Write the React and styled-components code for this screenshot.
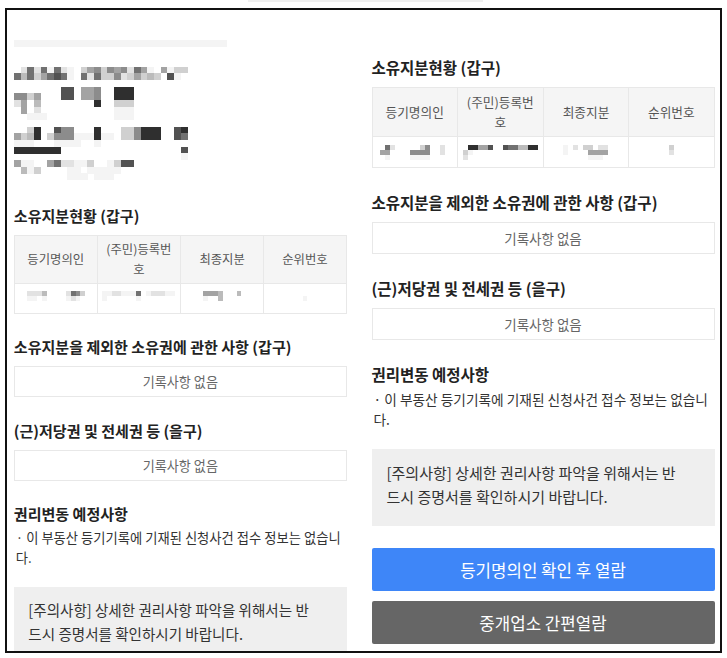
import React from "react";
import styled, { createGlobalStyle } from "styled-components";

const GlobalStyle = createGlobalStyle`
  html, body {
    margin: 0;
    padding: 0;
    background: #fff;
  }
  body {
    font-family: "Noto Sans CJK KR", "Noto Sans", sans-serif;
    color: #222;
  }
  * {
    box-sizing: border-box;
  }
`;

const SHADES = {
  1: "#f4f4f4",
  2: "#e2e2e2",
  3: "#d0d0d0",
  4: "#bbbbbb",
  5: "#a3a3a3",
  6: "#8c8c8c",
  7: "#717171",
  8: "#525252",
  9: "#2f2f2f",
};

const Page = styled.div`
  width: 727px;
  height: 658px;
  overflow: hidden;
  padding-left: 5px;
`;

const TopEdge = styled.div`
  width: 235px;
  height: 2px;
  margin: 0 0 6px 243px;
  background: #f0f0f0;
`;

const Frame = styled.div`
  display: flex;
  width: 717px;
  height: 645px;
  border: 2px solid #111;
  overflow: hidden;
`;

const Screen = styled.div`
  flex: none;
  width: ${(p) => p.$width}px;
  padding: ${(p) => p.$pad};
  zoom: ${(p) => p.$zoom || 1};
`;

const Intro = styled.div`
  height: 202px;
  padding-top: 31px;
`;

const MosaicSvg = styled.svg`
  display: block;
  filter: blur(0.3px);
`;

const Section = styled.section`
  margin-top: 24px;
  &:first-of-type {
    margin-top: 0;
  }
`;

const Title = styled.h3`
  margin: 0 0 10px;
  font-size: 15.5px;
  line-height: 20px;
  font-weight: 700;
  color: #222;
`;

const Table = styled.div`
  display: grid;
  grid-template-columns: repeat(4, 1fr);
  border-top: 1px solid #e8e8e8;
  border-left: 1px solid #e8e8e8;
`;

const HeadCell = styled.div`
  height: 49px;
  padding: 0 5px;
  display: flex;
  align-items: center;
  justify-content: center;
  text-align: center;
  background: #f5f5f5;
  border-right: 1px solid #e8e8e8;
  border-bottom: 1px solid #e8e8e8;
  font-size: 12.7px;
  line-height: 20px;
  color: #555;
`;

const DataCell = styled(HeadCell)`
  height: 31px;
  background: #fff;
`;

const EmptyBox = styled.div`
  height: 32px;
  display: flex;
  align-items: center;
  justify-content: center;
  border: 1px solid #e8e8e8;
  font-size: 13.5px;
  color: #666;
`;

const Bullet = styled.p`
  margin: -5px 0 0;
  padding-left: 2px;
  font-size: 13.7px;
  line-height: 20px;
  color: #333;
`;

const Notice = styled.div`
  margin-top: 20px;
  padding: 12px 28px 17px 15px;
  background: #efefef;
  font-size: 15px;
  line-height: 24px;
  color: #333;
`;

const ActionButton = styled.button`
  display: block;
  width: 100%;
  height: 43px;
  margin-top: ${(p) => p.$gap}px;
  border: 0;
  border-radius: 2px;
  background: ${(p) => p.$bg};
  color: #fff;
  font-family: "Noto Sans CJK KR", "Noto Sans", sans-serif;
  font-size: 16.8px;
  line-height: 43px;
`;

const Mosaic = ({ rows, cell }) => {
  const cols = Math.max(...rows.map((r) => r.length));
  return (
    <MosaicSvg
      width={cols * cell}
      height={rows.length * cell}
      viewBox={`0 0 ${cols} ${rows.length}`}
      shapeRendering="crispEdges"
    >
      {rows.flatMap((row, y) =>
        [...row].map((c, x) =>
          c === "0" ? null : (
            <rect key={`${x}-${y}`} x={x} y={y} width={1.02} height={1.02} fill={SHADES[c]} />
          )
        )
      )}
    </MosaicSvg>
  );
};

const introRows = [
  "11111111111111111111111111111111",
  "0",
  "0",
  "0",
  "02727172103563656275105133",
  "7473578710727336235343081",
  "0",
  "000000088055600999",
  "663500088055600999",
  "250400000000900333",
  "050200000000000111",
  "001110000000000111",
  "0",
  "00390086600090003369990089",
  "53490366611191103369990087",
  "11100011110010000000000000",
  "99999990000000000000000008",
  "00000000000000000000000001",
  "511005722113001388",
  "041300001101111100",
  "000000001110111000",
];

const rightCells = [
  ["07200000360020", "55000066660020", "01000011110000"],
  ["099558008774499", "310000000000000", "200000000000000"],
  ["102033022", "100005555", "000001110"],
  ["3", "2", "0"],
];

const leftCells = [
  ["222400002763", "110100001210", "000000000000"],
  ["112211170122211", "100000010000000", "000000000000000"],
  ["55540004", "10040000", "00000000"],
  ["1"],
];

const RegistryContent = ({ cells }) => (
  <>
    <Section>
      <Title>소유지분현황 (갑구)</Title>
      <Table>
        <HeadCell>등기명의인</HeadCell>
        <HeadCell>(주민)등록번호</HeadCell>
        <HeadCell>최종지분</HeadCell>
        <HeadCell>순위번호</HeadCell>
        {cells.map((rows, i) => (
          <DataCell key={i}>
            <Mosaic rows={rows} cell={5} />
          </DataCell>
        ))}
      </Table>
    </Section>
    <Section>
      <Title>소유지분을 제외한 소유권에 관한 사항 (갑구)</Title>
      <EmptyBox>기록사항 없음</EmptyBox>
    </Section>
    <Section>
      <Title>(근)저당권 및 전세권 등 (을구)</Title>
      <EmptyBox>기록사항 없음</EmptyBox>
    </Section>
    <Section>
      <Title>권리변동 예정사항</Title>
      <Bullet>· 이 부동산 등기기록에 기재된 신청사건 접수 정보는 없습니다.</Bullet>
    </Section>
    <Notice>[주의사항] 상세한 권리사항 파악을 위해서는 반드시 증명서를 확인하시기 바랍니다.</Notice>
  </>
);

const App = () => (
  <Page>
    <GlobalStyle />
    <TopEdge />
    <Frame>
      <Screen $width={362} $pad="0 12px 0 7px" $zoom={0.971}>
        <Intro>
          <Mosaic rows={introRows} cell={6.87} />
        </Intro>
        <RegistryContent cells={leftCells} />
      </Screen>
      <Screen $width={356} $pad="47px 0 0 13px">
        <RegistryContent cells={rightCells} />
        <ActionButton $bg="#3e86f8" $gap={22}>등기명의인 확인 후 열람</ActionButton>
        <ActionButton $bg="#666666" $gap={10}>중개업소 간편열람</ActionButton>
      </Screen>
    </Frame>
  </Page>
);

export default App;
